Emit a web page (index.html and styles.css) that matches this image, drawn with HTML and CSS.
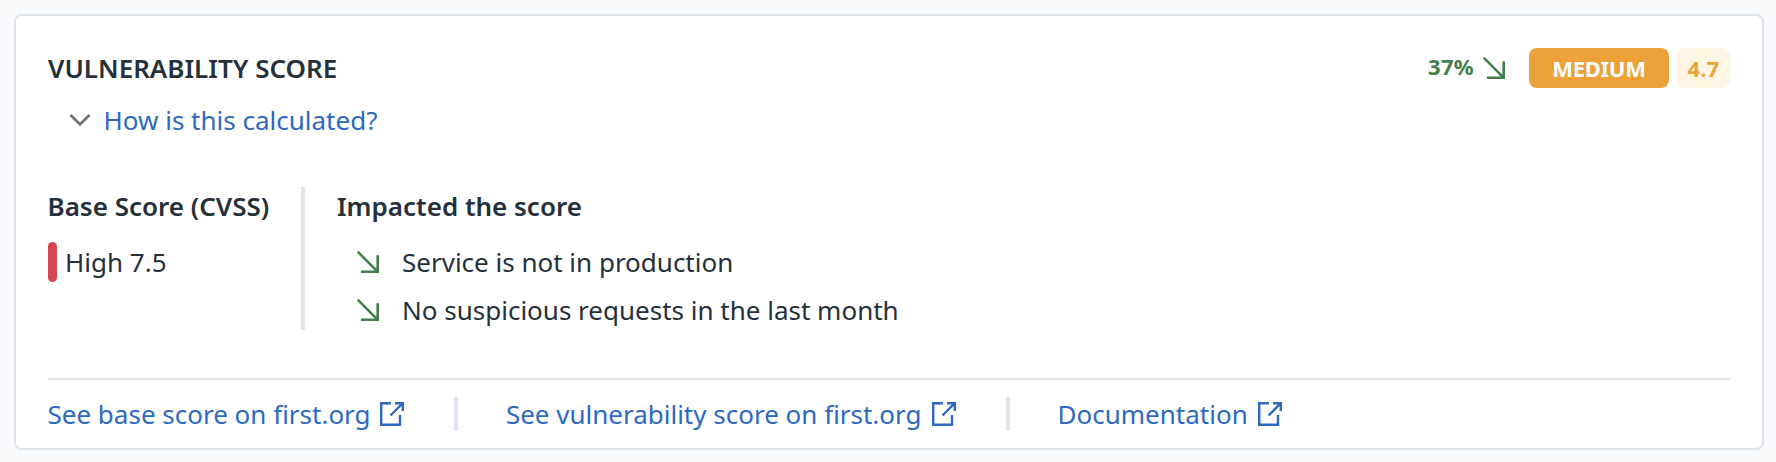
FILE: index.html
```
<!DOCTYPE html>
<html lang="en">
<head>
<meta charset="utf-8">
<title>Vulnerability score</title>
<link rel="stylesheet" href="styles.css">
</head>
<body>
<svg class="defs" width="0" height="0">
  <symbol id="down" viewBox="0 0 22 22"><path d="M.8.8 20.3 20.3M20.7 4.3V20.7H3.9"/></symbol>
  <symbol id="ext" viewBox="0 0 24 24"><path d="M11 1.2H1.2V22.8H20V13M15 1.2H22.8V9M22.3 1.7 10.5 13.5"/></symbol>
</svg>
<main class="card">
  <header class="head">
    <h1 class="title">VULNERABILITY SCORE</h1>
    <div class="summary">
      <span class="pct">37%</span>
      <svg class="icon down"><use href="#down"/></svg>
      <span class="badge">MEDIUM</span>
      <span class="score">4.7</span>
    </div>
  </header>
  <a class="how"><svg class="chev" viewBox="0 0 22 14"><path d="M1.5 2 11 11.5 20.5 2"/></svg><span>How is this calculated?</span></a>
  <section class="details">
    <div class="base">
      <h2 class="sub">Base Score (CVSS)</h2>
      <div class="high"><i class="bar"></i><span>High 7.5</span></div>
    </div>
    <div class="impact">
      <h2 class="sub">Impacted the score</h2>
      <ul class="list">
        <li class="item"><svg class="icon down"><use href="#down"/></svg><span>Service is not in production</span></li>
        <li class="item"><svg class="icon down"><use href="#down"/></svg><span>No suspicious requests in the last month</span></li>
      </ul>
    </div>
  </section>
  <footer class="links">
    <a class="link first"><span>See base score on first.org</span><svg class="icon ext"><use href="#ext"/></svg></a>
    <i class="sep"></i>
    <a class="link"><span>See vulnerability score on first.org</span><svg class="icon ext"><use href="#ext"/></svg></a>
    <i class="sep"></i>
    <a class="link"><span>Documentation</span><svg class="icon ext"><use href="#ext"/></svg></a>
  </footer>
</main>
</body>
</html>
```
FILE: styles.css
```
* { box-sizing: border-box; margin: 0; padding: 0; }
body { background: #f9fafc; padding: 14px 12px 12px 14px; height: 462px; font: 26px/36px "Noto Sans", sans-serif; color: #25303a; }
.defs { position: absolute; }
.card { height: 436px; background: #fff; border: 2px solid #e1e4eb; border-radius: 8px; padding: 32px 32px 0; }
.head { display: flex; justify-content: space-between; height: 40px; }
.title { font-size: 26px; font-weight: 600; line-height: 41px; }
.summary { display: flex; align-items: center; font-size: 22px; font-weight: 700; }
.icon { fill: none; stroke: currentColor; flex: none; }
.down { width: 22px; height: 22px; stroke-width: 2.6; color: #427f49; }
.ext { width: 24px; height: 24px; stroke-width: 2.4; }
.pct { color: #427f49; margin: -4px 9px 0 0; letter-spacing: 0.3px; }
.badge { width: 140px; height: 40px; line-height: 41px; margin-left: 24px; border-radius: 8px; background: #eca239; color: #fff; text-align: center; letter-spacing: -0.3px; }
.score { width: 53px; height: 40px; line-height: 41px; margin-left: 8px; border-radius: 8px; background: #fef5e3; color: #eca239; text-align: center; letter-spacing: 0.2px; }
.how { display: flex; align-items: center; height: 36px; margin: 14px 0 0 21px; color: #2d69c0; }
.chev { width: 22px; height: 14px; margin-right: 12.5px; fill: none; stroke: #687078; stroke-width: 2.6; }
.details { display: flex; height: 143px; margin-top: 49px; }
.base { width: 257px; border-right: 4px solid #e1e4ee; }
.base .sub { margin-left: -0.5px; }
.impact { padding-left: 32px; }
.sub { font-size: 26px; line-height: 38px; height: 40px; font-weight: 600; }
.high { display: flex; align-items: center; height: 40px; margin-top: 15px; }
.bar { width: 9px; height: 40px; border-radius: 4.5px; background: #d84650; margin-right: 8px; }
.list { list-style: none; margin-top: 11px; padding-left: 20px; }
.item { display: flex; align-items: center; height: 48px; gap: 23px; }
.links { display: flex; align-items: center; margin-top: 48px; border-top: 2px solid #e1e4eb; height: 70px; color: #2d69c0; }
.link { display: flex; align-items: center; gap: 10px; }
.first { margin-left: -0.5px; gap: 9.3px; }
.sep { width: 4px; height: 34px; margin: 0 48px 0 50px; background: #e1e4ee; }
```
